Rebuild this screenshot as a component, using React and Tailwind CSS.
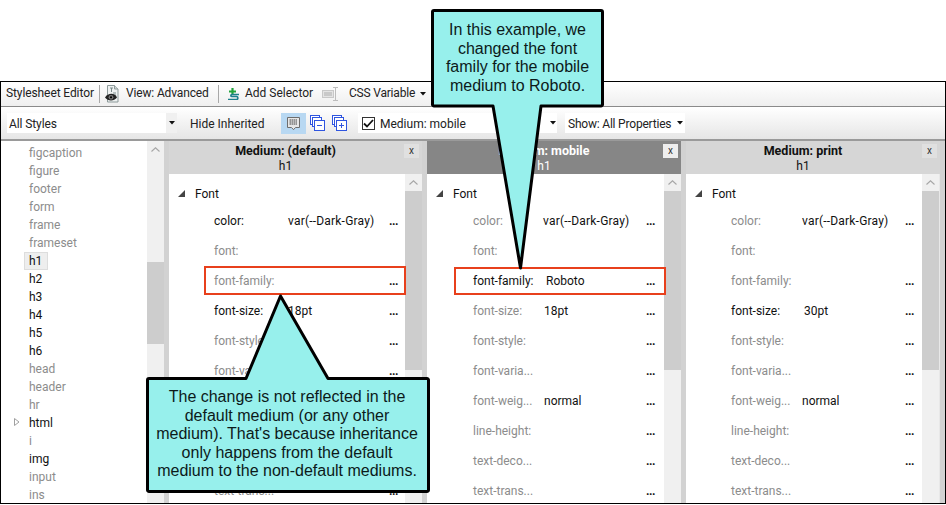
import React from "react";

const ui = { fontFamily: "Roboto, 'Noto Sans', sans-serif" };

const Caret = ({ className = "" }) => (
  <svg width="6" height="4" viewBox="0 0 6 4" className={className}><path d="M0 0h6L3 3.500z" fill="#111" /></svg>
);

const Chevron = () => (
  <svg width="9" height="5" viewBox="0 0 9 5"><path d="M0.5 4.500L4.500 0.800L8.500 4.500" fill="none" stroke="#a6a6a6" strokeWidth="1.100" /></svg>
);

const Sep = () => <div className="w-px h-[18px] bg-[#a8a8a8] shrink-0" />;

const EyeDocIcon = () => (
  <svg width="15" height="18" viewBox="0 0 15 18">
    <path d="M2.500.5h7l3.500 3.500v13h-10.500z" fill="#eef1f1" stroke="#8d9a9a" />
    <path d="M9.500.5v3.500h3.500" fill="#cfd6d6" stroke="#8d9a9a" />
    <path d="M5 3h3M6.500 3v4M8 8h3M8 10h3" stroke="#7a8a8a" strokeWidth="1" />
    <path d="M0 12.500C3 7.500 10 7.500 12 12.500C9 16.500 3 16.500 0 12.500z" fill="#222" />
    <circle cx="6" cy="12.300" r="2.400" fill="#777" />
    <circle cx="6" cy="12.300" r="1.100" fill="#000" />
  </svg>
);

const AddSelectorIcon = () => (
  <svg width="12" height="12" viewBox="0 0 12 12">
    <path d="M2 3.500h7M5.500 0v7" stroke="#20a33a" strokeWidth="2.200" />
    <path d="M12 6.500H5C3.500 6.500 3.500 8.500 5 8.500h4.500c1.800 0 1.800 3 0 3H1" fill="none" stroke="#1d7f8c" strokeWidth="1.700" />
  </svg>
);

const CssVarIcon = () => (
  <svg width="17" height="14" viewBox="0 0 17 14">
    <rect x="0.500" y="3.500" width="11" height="7" fill="#e4e4e4" stroke="#c8c8c8" />
    <rect x="2" y="5" width="8" height="4" fill="#c9c9c9" />
    <path d="M11 .5h5M11 13.500h5M13.500.5v13" stroke="#bdbdbd" strokeWidth="1" fill="none" />
  </svg>
);

const CommentIcon = () => (
  <svg width="15" height="15" viewBox="0 0 15 15">
    <path d="M1.500 1.500h12v10h-4l-2 2.200-2-2.200h-4z" fill="#e6e6e6" stroke="#6d6d6d" />
    <path d="M3.500 4h8M3.500 6h8M3.500 8h8" stroke="#444444" strokeWidth="1" strokeDasharray="1.500 .5" />
  </svg>
);

const StackIcon = ({ plus }) => (
  <svg width="15" height="16" viewBox="0 0 15 16">
    <g fill="#fff" stroke="#2f55e0" strokeWidth="1">
      <rect x="0.500" y="0.500" width="9" height="9" />
      <rect x="2.500" y="2.500" width="9" height="9" />
      <rect x="4.500" y="5.500" width="10" height="10" />
    </g>
    <path d={plus ? "M7 10.500h5M9.500 8v5" : "M7 10.500h5"} stroke="#2f55e0" strokeWidth="1" />
  </svg>
);

const ScrollBar = ({ thumbClass }) => (
  <div className="w-[17px] h-full bg-[#f0f0f0] flex flex-col shrink-0">
    <div className="h-[17px] flex items-center justify-center shrink-0"><Chevron /></div>
    <div className={`${thumbClass} bg-[#cdcdcd] shrink-0`} />
  </div>
);

const names = [
  ["figcaption"], ["figure"], ["footer"], ["form"], ["frame"], ["frameset"],
  ["h1", 1], ["h2", 1], ["h3", 1], ["h4", 1], ["h5", 1], ["h6", 1],
  ["head"], ["header"], ["hr"], ["html", 1], ["i"], ["img", 1], ["input"], ["ins"],
];

const ListPanel = () => (
  <div className="w-[163px] h-full flex shrink-0">
    <div className="w-[146px] bg-white pt-[3px] overflow-hidden shrink-0">
      {names.map(([n, dark]) => (
        <div key={n} className="h-[18px] flex items-center relative pl-[28px] text-[12px]">
          {n === "h1" && <div className="absolute left-[23px] top-0 w-[24px] h-[18px] bg-[#eeeeee] border border-[#dddddd]" />}
          {n === "html" && (
            <svg width="6" height="8" viewBox="0 0 6 8" className="absolute left-[13px] top-[4px]"><path d="M.5.500L5 4 .5 7.500z" fill="#fff" stroke="#a0a0a0" /></svg>
          )}
          <span className={`relative ${dark ? "text-[#111111]" : "text-[#8c8c8c]"}`}>{n}</span>
        </div>
      ))}
    </div>
    <ScrollBar thumbClass="mt-[104px] h-[82px]" />
  </div>
);

const props = [
  ["color:", "var(--Dark-Gray)"],
  ["font:", ""],
  ["font-family:", ""],
  ["font-size:", ""],
  ["font-style:", ""],
  ["font-varia...", ""],
  ["font-weig...", ""],
  ["line-height:", ""],
  ["text-deco...", ""],
  ["text-trans...", ""],
];

const Row = ({ label, value, dark, dots, pad, offset, dotsX, nudge = 0, box }) => (
  <div className="h-[30px] flex items-center relative text-[12px] shrink-0" style={{ paddingLeft: pad }}>
    <span className={`shrink-0 ${dark ? "text-[#111111]" : "text-[#8c8c8c]"}`} style={{ width: offset + nudge }}>{label}</span>
    <span className={`text-[#111111] whitespace-nowrap ${value.startsWith("var") ? "tracking-[0.2px]" : ""}`}>{value}</span>
    {dots && <span className="absolute top-[8px] text-[#111111] text-[12px] font-bold tracking-[-0.5px] leading-[14px]" style={{ left: dotsX }}>...</span>}
    {box && <div className={`absolute ${box} border-2 border-[#e8401c]`} />}
  </div>
);

const Column = ({ title, active, width, bodyW, pad, offset, dotsX, overrides, closeBg }) => (
  <div className="h-full flex shrink-0" style={{ width }}>
    <div className="flex flex-col min-w-0 flex-1">
      <div className={`h-[33px] relative text-center text-[12px] leading-[16px] pt-[2px] pr-[20px] shrink-0 ${active ? "bg-[#868686] text-white" : "bg-[#d6d6d6] text-[#111111]"}`}>
        <div className="font-bold text-[12.500px]">{title}</div>
        <div className="leading-[14px]">h1</div>
        <div className={`absolute top-[3px] right-[3px] w-[15px] h-[14px] ${closeBg} flex items-center justify-center text-[10px] leading-none text-[#333333]`}>x</div>
      </div>
      <div className="flex-1 flex min-h-0">
        <div className="bg-white shrink-0 flex flex-col" style={{ width: bodyW }}>
          <div className="h-[32px] flex items-center text-[12px] text-[#111111] pl-[26px] relative shrink-0 pt-[8px]">
            <svg width="7" height="7" viewBox="0 0 7 7" className="absolute left-[9px] top-[16px]"><path d="M7 0v7H0z" fill="#444" /></svg>
            Font
          </div>
          {props.map(([l, v]) => {
            const o = overrides[l] || {};
            return (
              <Row
                key={l}
                label={l}
                value={o.value ?? v}
                dark={o.dark}
                dots={l !== "font:"}
                pad={pad}
                offset={offset}
                dotsX={dotsX}
                nudge={o.nudge || 0}
                box={o.box}
              />
            );
          })}
        </div>
        <ScrollBar thumbClass="h-[179px]" />
      </div>
    </div>
    <div className="w-[5px] h-full bg-[#d2d2d2] shrink-0" />
  </div>
);

export default function App() {
  return (
    <div className="relative w-[946px] h-[505px] bg-white overflow-hidden flex flex-col" style={ui}>
      <div className="h-[81px] shrink-0" />
      <div className="h-[423px] border border-black flex flex-col text-[12px] text-[#222222] shrink-0 overflow-hidden">
        <div className="h-[25px] shrink-0 flex items-center bg-gradient-to-b from-white to-[#efefef] border-b border-[#8a8a8a]">
          <span className="ml-[5px] w-[93px] pb-[2px] tracking-[-0.1px]">Stylesheet Editor</span>
          <Sep />
          <div className="ml-[5px] w-[21px]"><EyeDocIcon /></div>
          <span className="w-[92px] pb-[2px] tracking-[-0.15px]">View: Advanced</span>
          <Sep />
          <div className="ml-[8px] w-[18px] pb-[1px]"><AddSelectorIcon /></div>
          <span className="w-[77px] pb-[2px]">Add Selector</span>
          <div className="w-[27px]"><CssVarIcon /></div>
          <span className="w-[71px] pb-[2px] tracking-[-0.2px]">CSS Variable</span>
          <Caret />
        </div>
        <div className="h-[34px] shrink-0 flex items-center bg-gradient-to-b from-white to-[#e6e6e6] border-b-2 border-[#9a9a9a]">
          <div className="ml-[6px] w-[170px] h-[20px] bg-white flex items-center justify-between shrink-0">
            <span className="ml-[2px] pt-[2px] tracking-[-0.1px]">All Styles</span>
            <div className="w-[11px] h-full bg-[#f0f0f0] flex items-center justify-center"><Caret /></div>
          </div>
          <span className="ml-[13px] w-[91px] shrink-0 pt-[2px]">Hide Inherited</span>
          <div className="w-[25px] h-[21px] bg-[#b8d8f2] flex items-center justify-center shrink-0"><CommentIcon /></div>
          <div className="ml-[4px] w-[22px] shrink-0"><StackIcon /></div>
          <div className="w-[24px] shrink-0"><StackIcon plus /></div>
          <div className="ml-[2px] w-[199px] h-[20px] bg-white flex items-center shrink-0">
            <div className="ml-[4px] w-[13px] h-[13px] border border-[#333333] bg-white flex items-center justify-center shrink-0">
              <svg width="11" height="9" viewBox="0 0 11 9"><path d="M1 4.500L4 7.500L10 1" fill="none" stroke="#111" strokeWidth="1.800" /></svg>
            </div>
            <span className="ml-[5px] flex-1 pt-[2px]">Medium: mobile</span>
            <Caret className="mr-[1px]" />
          </div>
          <div className="ml-[8px] w-[120px] h-[20px] bg-white flex items-center shrink-0">
            <span className="ml-[3px] w-[109px] pt-[2px] tracking-[-0.2px]">Show: All Properties</span>
            <Caret />
          </div>
        </div>
        <div className="flex-1 min-h-0 flex bg-[#e8e8e8]">
          <ListPanel />
          <div className="w-[5px] h-full bg-[#d2d2d2] shrink-0" />
          <Column
            title="Medium: (default)"
            width={258}
            bodyW={236}
            pad={45}
            offset={74}
            dotsX={220}
            closeBg="bg-[#e0e0e0]"
            overrides={{
              "color:": { dark: true },
              "font-family:": { box: "left-[35px] -right-[1px] top-0 h-[29px]" },
              "font-size:": { dark: true, value: "18pt" },
            }}
          />
          <Column
            title="Medium: mobile"
            active
            width={259}
            bodyW={237}
            pad={46}
            offset={70}
            dotsX={219}
            closeBg="bg-[#eeeeee]"
            overrides={{
              "font-family:": { dark: true, value: "Roboto", nudge: 3, box: "left-[27px] -right-[2px] top-[1px] h-[28px]" },
              "font-size:": { value: "18pt", nudge: 1 },
              "font-weig...": { value: "normal", nudge: 1 },
            }}
          />
          <Column
            title="Medium: print"
            width={259}
            bodyW={236}
            pad={45}
            offset={71}
            dotsX={219}
            closeBg="bg-[#e0e0e0]"
            overrides={{
              "font-size:": { dark: true, value: "30pt", nudge: 2 },
              "font-weig...": { value: "normal" },
            }}
          />
        </div>
      </div>

      <svg className="absolute left-0 top-0 pointer-events-none" width="946" height="505" viewBox="0 0 946 505">
        <path
          d="M434 10.500H601a1.500 1.500 0 0 1 1.500 1.500V104.500a1.500 1.500 0 0 1-1.500 1.500H541L520.500 268 493 106H434a1.500 1.500 0 0 1-1.500-1.500V12a1.500 1.500 0 0 1 1.500-1.500z"
          fill="#97f0ec" stroke="#000" strokeWidth="3" strokeLinejoin="round"
        />
        <path
          d="M149 378.500H246L280.500 296 328 378.500H427a1.500 1.500 0 0 1 1.500 1.500V490a1.500 1.500 0 0 1-1.500 1.500H149a1.500 1.500 0 0 1-1.500-1.500V380a1.500 1.500 0 0 1 1.500-1.500z"
          fill="#97f0ec" stroke="#000" strokeWidth="3" strokeLinejoin="round"
        />
      </svg>
      <div className="absolute left-[434px] top-[21px] w-[167px] text-center text-[#0c1a1a] text-[16px] leading-[18.500px]" style={{ fontFamily: "'Liberation Sans', Arial, sans-serif" }}>
        In this example, we<br />changed the font<br />family for the mobile<br />medium to Roboto.
      </div>
      <div className="absolute left-[148px] top-[388px] w-[278px] text-center text-[#0c1a1a] text-[16px] leading-[18.500px]" style={{ fontFamily: "'Liberation Sans', Arial, sans-serif" }}>
        The change is not reflected in the<br />default medium (or any other<br />medium). That's because inheritance<br />only happens from the default<br />medium to the non-default mediums.
      </div>
    </div>
  );
}
